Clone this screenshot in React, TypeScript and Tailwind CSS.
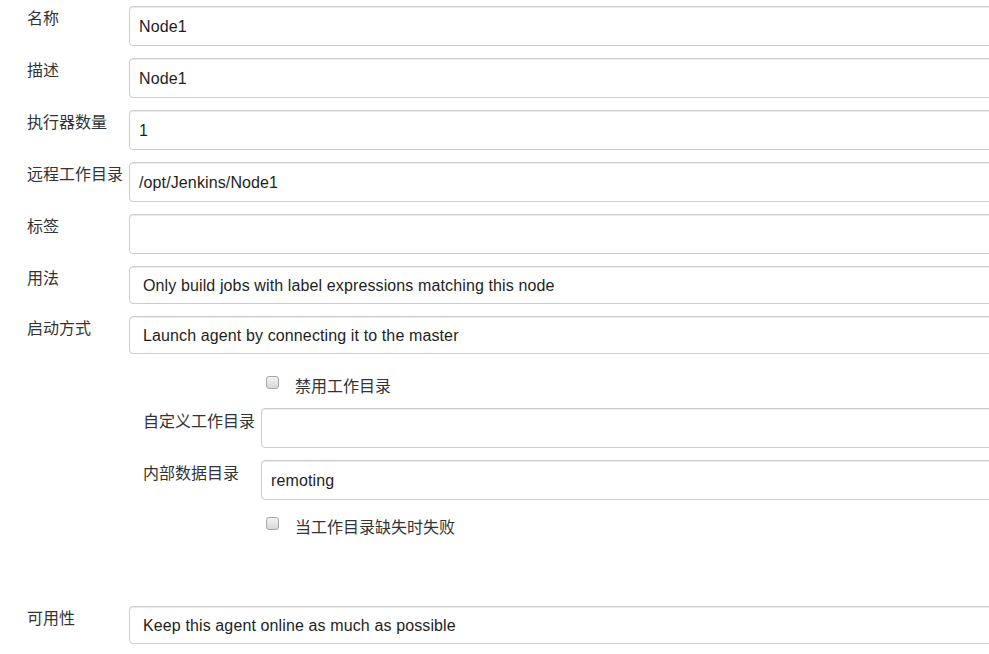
import React from "react";

const cjk = { fontFamily: '"Noto Sans CJK SC", "Microsoft YaHei", sans-serif' };
const latin = { fontFamily: '"Liberation Sans", Arial, "Noto Sans CJK SC", sans-serif' };

function Field({ value, select = false, h = 40 }: { value?: string; select?: boolean; h?: number }) {
  return (
    <div
      className={`w-[880px] shrink-0 border border-[#cccccc] rounded-[4px] bg-white flex items-center text-[16px] tracking-[0.12px] text-[#1e1e1e] shadow-[inset_0_1px_1px_rgba(0,0,0,0.075)] ${
        select ? "pl-[13px]" : "pl-[9px]"
      }`}
      style={{ ...latin, height: h }}
    >
      <span className="translate-y-[1px]">{value}</span>
    </div>
  );
}

function Row({ label, children, className = "" }: { label: string; children: React.ReactNode; className?: string }) {
  return (
    <div className={`flex ${className}`}>
      <div className="w-[102px] shrink-0 text-[16px] leading-[22px] text-[#333333]" style={cjk}>
        {label}
      </div>
      {children}
    </div>
  );
}

function NestedRow({ label, children, className = "" }: { label: string; children: React.ReactNode; className?: string }) {
  return (
    <div className={`flex ml-[116px] ${className}`}>
      <div className="w-[118px] shrink-0 text-[16px] leading-[22px] text-[#333333] pt-[1px]" style={cjk}>
        {label}
      </div>
      {children}
    </div>
  );
}

function Checkbox({ label, className = "" }: { label: string; className?: string }) {
  return (
    <div className={`flex items-start h-[22px] ml-[239px] ${className}`}>
      <div className="mt-[2px] w-[13px] h-[13px] rounded-[3px] border border-[#a6a6a6] bg-gradient-to-b from-[#f4f4f4] to-[#d8d8d8] shrink-0" />
      <div className="ml-[16px] text-[16px] leading-[22px] text-[#333333]" style={cjk}>
        {label}
      </div>
    </div>
  );
}

export default function App() {
  return (
    <div className="w-[989px] h-[654px] overflow-hidden bg-white">
      <div className="pl-[27px] pt-[6px] flex flex-col">
        <Row label="名称">
          <Field value="Node1" />
        </Row>
        <Row label="描述" className="mt-[12px]">
          <Field value="Node1" />
        </Row>
        <Row label="执行器数量" className="mt-[12px]">
          <Field value="1" />
        </Row>
        <Row label="远程工作目录" className="mt-[12px]">
          <Field value="/opt/Jenkins/Node1" />
        </Row>
        <Row label="标签" className="mt-[12px]">
          <Field value="" />
        </Row>
        <Row label="用法" className="mt-[12px]">
          <Field value="Only build jobs with label expressions matching this node" select h={38} />
        </Row>
        <Row label="启动方式" className="mt-[12px]">
          <Field value="Launch agent by connecting it to the master" select h={38} />
        </Row>
        <Checkbox label="禁用工作目录" className="mt-[20px]" />
        <NestedRow label="自定义工作目录" className="mt-[12px]">
          <Field value="" />
        </NestedRow>
        <NestedRow label="内部数据目录" className="mt-[12px]">
          <Field value="remoting" />
        </NestedRow>
        <Checkbox label="当工作目录缺失时失败" className="mt-[15px]" />
        <Row label="可用性" className="mt-[69px]">
          <Field value="Keep this agent online as much as possible" select h={38} />
        </Row>
      </div>
    </div>
  );
}
